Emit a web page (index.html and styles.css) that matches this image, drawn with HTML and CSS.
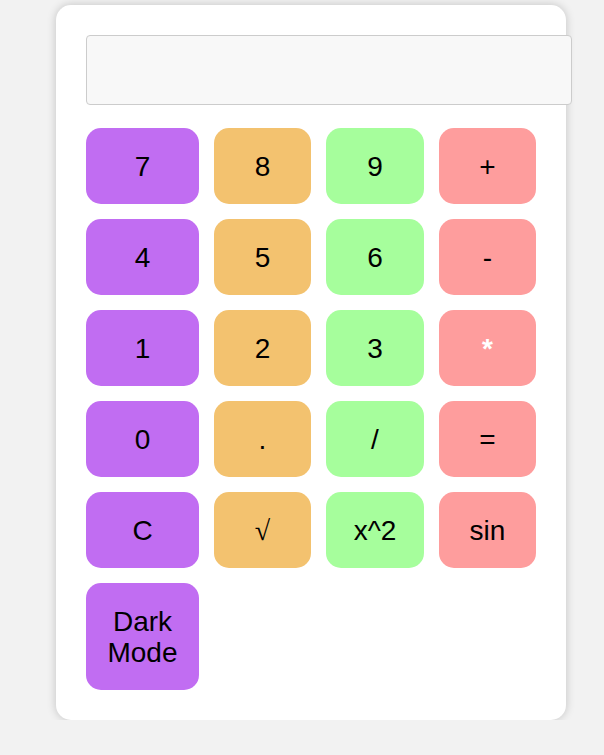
FILE: index.html
```html
<!DOCTYPE html>
<html>
<head>
<meta charset="utf-8">
<link rel="stylesheet" href="styles.css">
</head>
<body>
<div class="calculator">
  <input class="display" type="text" readonly>
  <div class="keys">
    <button class="key purple">7</button>
    <button class="key orange">8</button>
    <button class="key green">9</button>
    <button class="key red">+</button>
    <button class="key purple">4</button>
    <button class="key orange">5</button>
    <button class="key green">6</button>
    <button class="key red">-</button>
    <button class="key purple">1</button>
    <button class="key orange">2</button>
    <button class="key green">3</button>
    <button class="key red white">*</button>
    <button class="key purple">0</button>
    <button class="key orange">.</button>
    <button class="key green">/</button>
    <button class="key red">=</button>
    <button class="key purple">C</button>
    <button class="key orange sqrt">√</button>
    <button class="key green">x^2</button>
    <button class="key red">sin</button>
    <button class="key purple">Dark<br>Mode</button>
  </div>
</div>
</body>
</html>
```

FILE: styles.css
```css
html, body {
  margin: 0;
  padding: 0;
  background: #f2f2f2;
}
body {
  padding: 5px 0 0 56px;
  font-family: "Liberation Sans", Arial, sans-serif;
}
.calculator {
  box-sizing: border-box;
  width: 510px;
  height: 715px;
  background: #fff;
  border-radius: 15px;
  box-shadow: 0 0 10px rgba(0, 0, 0, 0.2);
  padding: 30px;
}
.display {
  display: block;
  box-sizing: border-box;
  width: 486px;
  height: 70px;
  margin: 0 0 23px 0;
  padding: 0 15px;
  border: 1px solid #ccc;
  border-radius: 4px;
  background: #f8f8f8;
  font-family: "Liberation Sans", Arial, sans-serif;
  font-size: 24px;
  outline: none;
}
.keys {
  display: grid;
  grid-template-columns: 113px 97px 98px 97px;
  gap: 15px;
}
.key {
  border: none;
  border-radius: 15px;
  padding: 22.5px 0;
  font-family: "Liberation Sans", Arial, sans-serif;
  font-size: 28px;
  line-height: 31px;
  color: #000;
  text-align: center;
}
.purple { background: #c16df2; }
.orange { background: #f3c26f; }
.green { background: #a6fe9c; }
.red { background: #fe9d9d; }
.white { color: #fff; font-weight: bold; }
.sqrt { font-family: "Liberation Serif", "DejaVu Serif", serif; }
```
